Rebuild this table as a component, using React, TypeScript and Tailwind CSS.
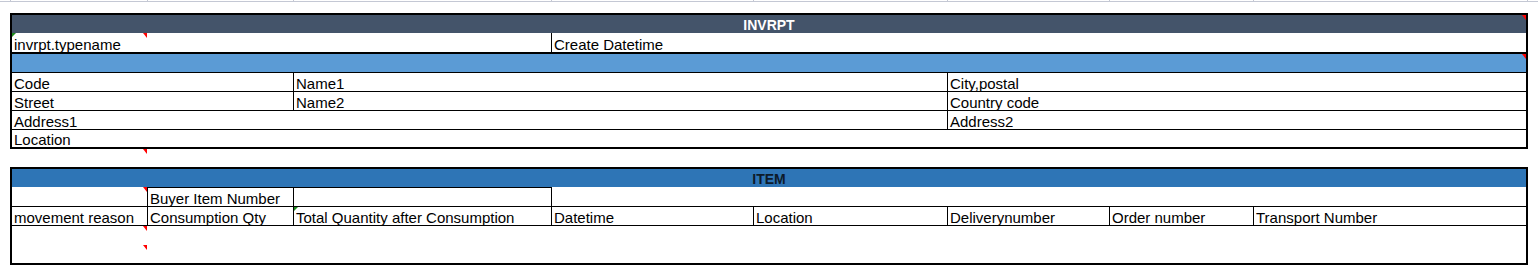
import React from 'react';

// comment indicators, the little corner flags Excel draws
function RedFlag({ className }: { className: string }) {
  return (
    <span
      className={`absolute w-0 h-0 border-t-[5px] border-t-[#ff0000] border-l-[4px] border-l-transparent ${className}`}
    />
  );
}

function GreenFlag({ className }: { className: string }) {
  return (
    <span
      className={`absolute w-0 h-0 border-t-[4px] border-t-[#1e8b1e] border-r-[4px] border-r-transparent ${className}`}
    />
  );
}

function Cell({ w, text, className = '', children }: { w?: string; text?: string; className?: string; children?: React.ReactNode }) {
  return (
    <div className={`relative flex items-end pl-[2px] whitespace-nowrap h-full ${w ?? 'flex-1'} ${className}`}>
      <span className="leading-[15px]">{text}</span>
      {children}
    </div>
  );
}

const GRID_COLS = ['w-[11px]', 'w-[137px]', 'w-[146px]', 'w-[258px]', 'w-[202px]', 'w-[194px]', 'w-[162px]', 'w-[144px]', 'w-[274px]'];

export default function App() {
  return (
    <div className="w-[1538px] h-[276px] bg-white overflow-hidden text-[15px] text-black font-['Liberation_Sans',Arial,sans-serif]">
      {/* gridlines peeking out above */}
      <div className="flex h-[2px] border-b border-[#c4c8d4]">
        {GRID_COLS.map((c, i) => (
          <div key={i} className={`${c} h-full border-r border-[#c4c8d4]`} />
        ))}
      </div>

      {/* INVRPT block */}
      <div className="mt-[11px] ml-[10px] w-[1518px] border-2 border-black">
        <div className="relative h-[18px] bg-[#44546a] flex items-end justify-center">
          <span className="text-white font-bold text-[14px] leading-[16px]">INVRPT</span>
          <RedFlag className="top-0 right-0" />
        </div>
        <div className="flex h-[21px] border-b-2 border-black">
          <Cell w="w-[540px]" text="invrpt.typename" className="border-r border-black">
            <GreenFlag className="top-0 left-0" />
            <RedFlag className="top-0 left-[131px]" />
          </Cell>
          <Cell text="Create Datetime" />
        </div>
        <div className="relative h-[19px] bg-[#5b9bd5] border-b border-black">
          <RedFlag className="top-0 right-0" />
        </div>
        <div className="flex h-[19px] border-b border-black">
          <Cell w="w-[282px]" text="Code" className="border-r border-black" />
          <Cell w="w-[654px]" text="Name1" className="border-r border-black" />
          <Cell text="City,postal" />
        </div>
        <div className="flex h-[19px] border-b border-black">
          <Cell w="w-[282px]" text="Street" className="border-r border-black" />
          <Cell w="w-[654px]" text="Name2" className="border-r border-black" />
          <Cell text="Country code" />
        </div>
        <div className="flex h-[19px] border-b border-black">
          <Cell w="w-[936px]" text="Address1" className="border-r border-black" />
          <Cell text="Address2" />
        </div>
        <div className="flex h-[17px]">
          <Cell text="Location" />
        </div>
      </div>

      <div className="relative h-[18px]">
        <RedFlag className="top-0 left-[143px]" />
      </div>

      {/* ITEM block */}
      <div className="ml-[10px] w-[1518px] border-2 border-black">
        <div className="h-[18px] bg-[#2e75b6] flex items-end justify-center">
          <span className="text-[#0d1b2a] font-bold text-[14px] leading-[16px]">ITEM</span>
        </div>
        <div className="flex h-[19px]">
          <Cell w="w-[136px]" className="border-r border-black">
            <RedFlag className="top-0 right-0" />
          </Cell>
          <Cell w="w-[146px]" text="Buyer Item Number" className="border-t border-r border-black" />
          <Cell w="w-[258px]" className="border-t border-r border-black" />
          <Cell />
        </div>
        <div className="flex h-[20px] border-y border-black">
          <Cell w="w-[136px]" text="movement reason" className="border-r border-black" />
          <Cell w="w-[146px]" text="Consumption Qty" className="border-r border-black" />
          <Cell w="w-[258px]" text="Total Quantity after Consumption" className="border-r border-black">
            <GreenFlag className="top-0 left-0" />
          </Cell>
          <Cell w="w-[202px]" text="Datetime" className="border-r border-black" />
          <Cell w="w-[194px]" text="Location" className="border-r border-black" />
          <Cell w="w-[162px]" text="Deliverynumber" className="border-r border-black" />
          <Cell w="w-[144px]" text="Order number" className="border-r border-black" />
          <Cell text="Transport Number" />
        </div>
        <div className="relative h-[37px]">
          <RedFlag className="top-0 left-[131px]" />
          <RedFlag className="top-[19px] left-[131px]" />
        </div>
      </div>
    </div>
  );
}
